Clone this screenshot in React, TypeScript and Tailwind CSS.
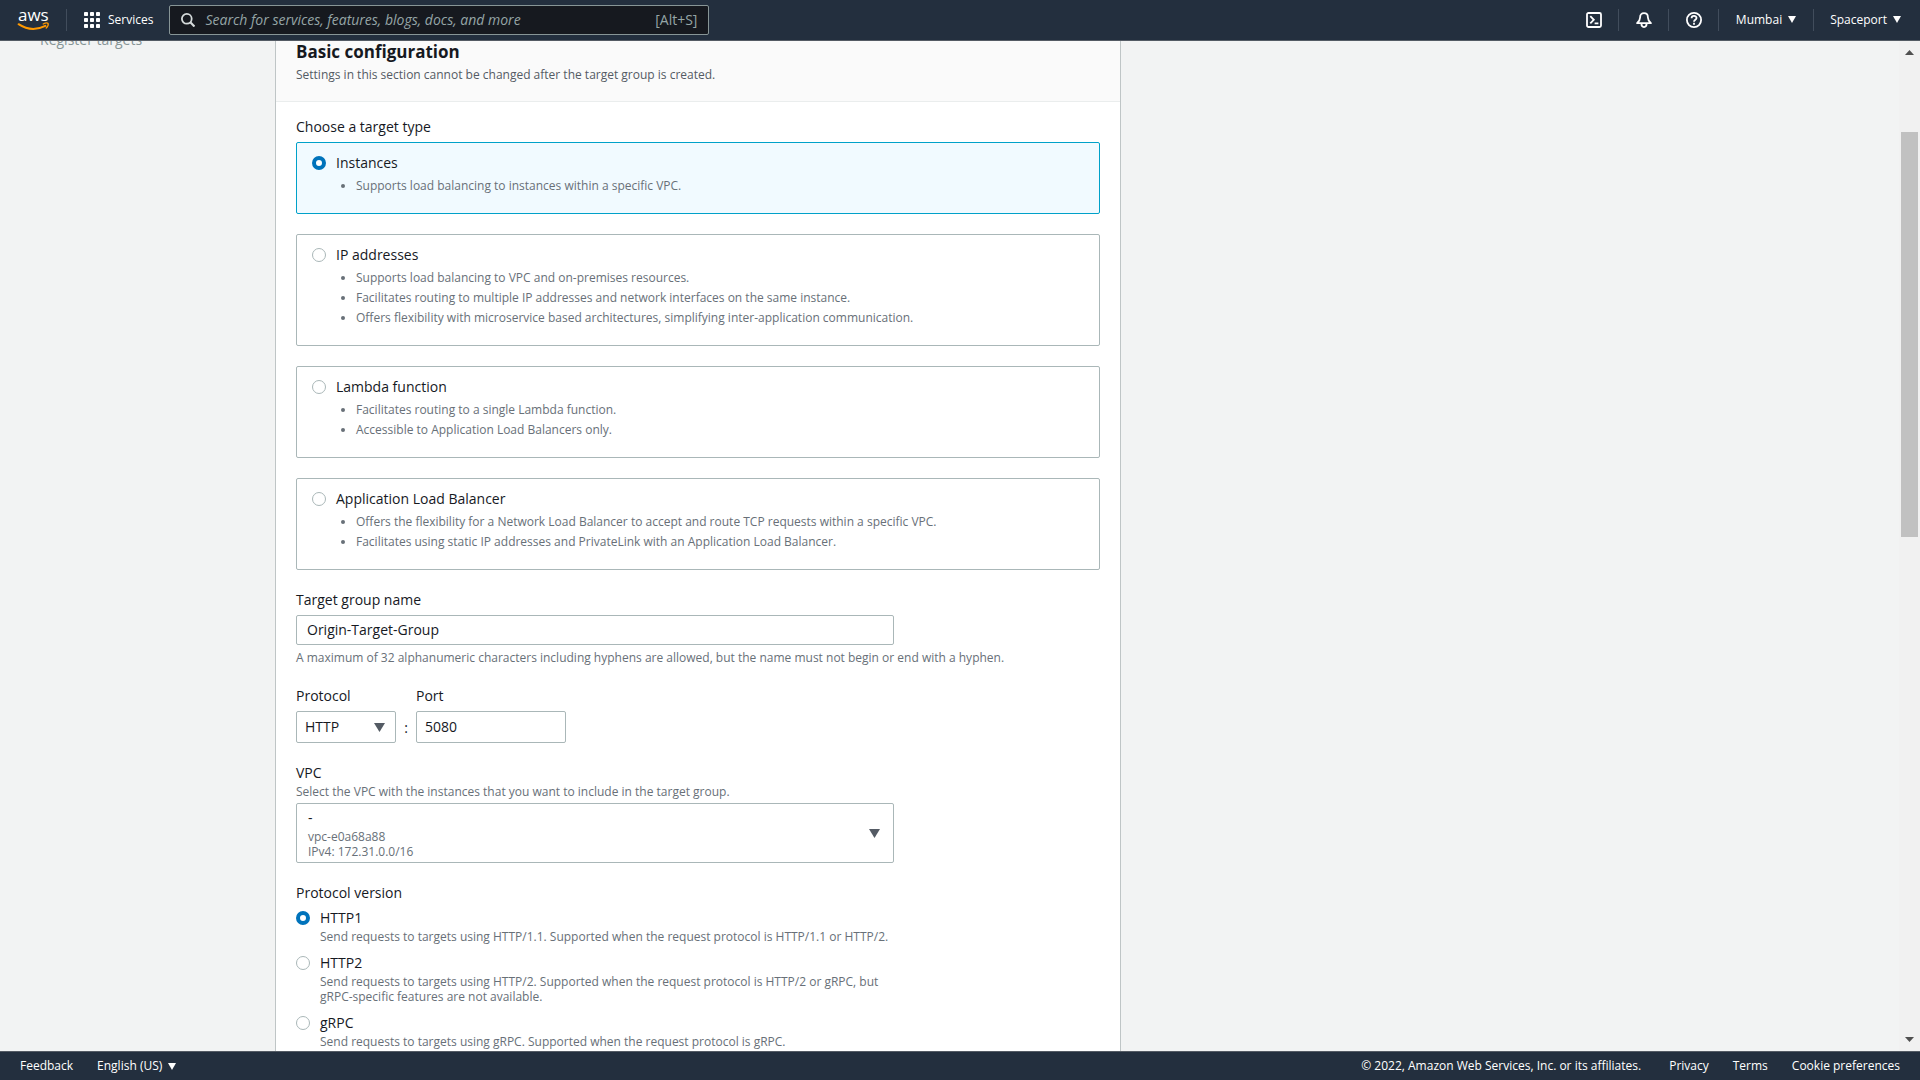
import { useState } from 'react'
import clsx from 'clsx'

const targetTypes = [
  {
    id: 'instances',
    label: 'Instances',
    notes: ['Supports load balancing to instances within a specific VPC.'],
  },
  {
    id: 'ip',
    label: 'IP addresses',
    notes: [
      'Supports load balancing to VPC and on-premises resources.',
      'Facilitates routing to multiple IP addresses and network interfaces on the same instance.',
      'Offers flexibility with microservice based architectures, simplifying inter-application communication.',
    ],
  },
  {
    id: 'lambda',
    label: 'Lambda function',
    notes: [
      'Facilitates routing to a single Lambda function.',
      'Accessible to Application Load Balancers only.',
    ],
  },
  {
    id: 'alb',
    label: 'Application Load Balancer',
    notes: [
      'Offers the flexibility for a Network Load Balancer to accept and route TCP requests within a specific VPC.',
      'Facilitates using static IP addresses and PrivateLink with an Application Load Balancer.',
    ],
  },
]

const versions = [
  {
    id: 'http1',
    label: 'HTTP1',
    text: 'Send requests to targets using HTTP/1.1. Supported when the request protocol is HTTP/1.1 or HTTP/2.',
  },
  {
    id: 'http2',
    label: 'HTTP2',
    text: 'Send requests to targets using HTTP/2. Supported when the request protocol is HTTP/2 or gRPC, but gRPC-specific features are not available.',
  },
  {
    id: 'grpc',
    label: 'gRPC',
    text: 'Send requests to targets using gRPC. Supported when the request protocol is gRPC.',
  },
]

const radioClass =
  'size-3.5 shrink-0 appearance-none rounded-full border border-[#aab7b8] bg-white checked:border-4 checked:border-[#0073bb]'

function Caret({ className }: { className?: string }) {
  return (
    <svg viewBox="0 0 10 8" preserveAspectRatio="none" fill="currentColor" className={clsx('shrink-0', className)}>
      <path d="M0 0h10L5 8z" />
    </svg>
  )
}

function Divider() {
  return <div className="h-[22px] w-px bg-[#414d5c]" />
}

function Logo() {
  return (
    <svg viewBox="0 0 32 24" className="h-6 w-8 overflow-visible">
      <text x="0" y="13" fontSize="17" fill="#fff" fontFamily="Open Sans">aws</text>
      <path
        d="M0.6 16.2c8.4 5.600 18.2 6 26.8 1.700"
        stroke="#ff9900"
        strokeWidth="2"
        strokeLinecap="round"
        fill="none"
      />
      <path d="M25.2 16c2-1 4.400-1.100 4.900-.5.3.9-.4 3.200-1.900 4.600" stroke="#ff9900" strokeWidth="1.3" strokeLinecap="round" fill="none" />
    </svg>
  )
}

function Header() {
  return (
    <header className="flex h-[41px] shrink-0 items-center border-b border-[#545b64] bg-[#232f3e] pb-px pr-[19px] text-xs font-medium text-white">
      <a href="#" aria-label="AWS home" className="ml-[18px]">
        <Logo />
      </a>
      <div className="ml-4">
        <Divider />
      </div>
      <button className="ml-[17px] flex items-center gap-2">
        <svg viewBox="0 0 16 16" fill="#fff" className="size-4">
          {[0, 6, 12].map((y) => [0, 6, 12].map((x) => <rect key={`${x}-${y}`} x={x} y={y} width="4" height="4" rx="0.8" />))}
        </svg>
        Services
      </button>
      <div className="ml-4 flex h-[30px] w-[540px] items-center rounded-xs border border-[#879596] bg-[#16191f] px-[11px] text-sm font-normal text-[#95a5a6]">
        <svg viewBox="0 0 14 14" fill="none" stroke="#d5dbdb" strokeWidth="1.8" className="size-3.5 shrink-0">
          <circle cx="5.8" cy="5.8" r="4.9" />
          <path d="m9.3 9.3 4.2 4.2" strokeWidth="2.2" />
        </svg>
        <input
          type="search"
          aria-label="Search"
          placeholder="Search for services, features, blogs, docs, and more"
          className="ml-2.5 min-w-0 flex-1 bg-transparent italic outline-none placeholder:text-[#95a5a6]"
        />
        <span>[Alt+S]</span>
      </div>

      <div className="ml-auto flex items-center">
        <button aria-label="CloudShell" className="px-4">
          <svg viewBox="0 0 16 16" fill="none" stroke="#fff" strokeWidth="1.8" className="size-4">
            <rect x="1" y="1" width="14" height="14" rx="1.5" />
            <path d="m4.3 4.2 3.5 3.6-3.5 3.6M8.6 11.4h3.8" />
          </svg>
        </button>
        <Divider />
        <button aria-label="Notifications" className="pl-[17px] pr-4">
          <svg viewBox="0 0 16 16" fill="none" stroke="#fff" strokeWidth="1.8" strokeLinejoin="round" className="size-4">
            <path d="M8 1.2c-2.500 0-3.900 1.700-3.900 4.200 0 2.300-.9 3.700-3 5.800h13.800c-2.100-2.100-3-3.500-3-5.800C11.900 2.900 10.500 1.200 8 1.200z" />
            <path d="M5.400 11.600c0 4.600 5.200 4.600 5.200 0" />
          </svg>
        </button>
        <Divider />
        <button aria-label="Help" className="pl-[17px] pr-4">
          <svg viewBox="0 0 16 16" fill="none" stroke="#fff" strokeWidth="1.8" className="size-4">
            <circle cx="8" cy="8" r="7.1" />
            <path d="M5.600 6.200c0-3 4.900-3 4.900-.2 0 1.700-2.500 1.700-2.500 3.700" />
            <path d="M8 10.800v2" />
          </svg>
        </button>
        <Divider />
        <button className="flex items-center gap-1.5 px-[17px]">
          Mumbai <Caret className="h-[7px] w-2" />
        </button>
        <Divider />
        <button className="flex items-center gap-1.5 pl-4">
          Spaceport <Caret className="h-[7px] w-2" />
        </button>
      </div>
    </header>
  )
}

function TargetTypes() {
  const [type, setType] = useState('instances')
  return (
    <fieldset>
      <legend className="mb-1">Choose a target type</legend>
      <div className="flex flex-col gap-5">
        {targetTypes.map((t) => (
          <div
            key={t.id}
            className={clsx(
              'rounded-xs border px-[15px] pb-[17px] pt-[9px]',
              t.id === type ? 'border-[#00a1c9] bg-[#f1faff]' : 'border-[#aab7b8] bg-white',
            )}
          >
            <label className="flex items-center gap-2.5">
              <input
                type="radio"
                name="target-type"
                checked={t.id === type}
                onChange={() => setType(t.id)}
                className={radioClass}
              />
              {t.label}
            </label>
            <ul className="mt-0.5 list-disc pl-11 text-xs/5 text-[#687078]">
              {t.notes.map((n) => (
                <li key={n}>{n}</li>
              ))}
            </ul>
          </div>
        ))}
      </div>
    </fieldset>
  )
}

function ProtocolVersion() {
  const [version, setVersion] = useState('http1')
  return (
    <fieldset className="max-w-[598px]">
      <legend className="mb-[3px]">Protocol version</legend>
      <div className="flex flex-col gap-2">
        {versions.map((v) => (
          <div key={v.id}>
            <label className="flex items-center gap-2.5">
              <input
                type="radio"
                name="version"
                checked={v.id === version}
                onChange={() => setVersion(v.id)}
                className={radioClass}
              />
              {v.label}
            </label>
            <p className="pl-6 text-xs/[15px] text-[#687078]">{v.text}</p>
          </div>
        ))}
      </div>
    </fieldset>
  )
}

export default function App() {
  return (
    <div className="flex h-screen flex-col overflow-hidden bg-[#f2f3f3] font-['Open_Sans',sans-serif] text-sm/[22px] text-[#16191f]">
      <Header />

      <div className="flex min-h-0 flex-1">
        <div className="min-w-0 flex-1 overflow-hidden">
          {/* scrolled content */}
          <div className="-mt-3 flex">
            <nav className="w-[275px] shrink-0 pl-10 text-[#879596]">Register targets</nav>

            <main className="w-full max-w-[846px] border-x border-[#bfc5c6] bg-white">
              <div className="border-b border-[#eaeded] bg-[#fafafa] px-5 pb-[15px] pt-3">
                <h2 className="text-[17px]/[22px] font-bold">Basic configuration</h2>
                <p className="mt-px text-xs/[22px] text-[#545b64]">
                  Settings in this section cannot be changed after the target group is created.
                </p>
              </div>

              <form className="flex flex-col gap-[19px] px-5 pb-6 pt-3.5">
                <TargetTypes />

                <div>
                  <label htmlFor="name" className="mb-1 block">Target group name</label>
                  <input
                    id="name"
                    defaultValue="Origin-Target-Group"
                    className="block h-[30px] w-full max-w-[598px] rounded-xs border border-[#aab7b8] px-2.5 pb-0.5"
                  />
                  <p className="mt-[5px] text-xs text-[#687078]">
                    A maximum of 32 alphanumeric characters including hyphens are allowed, but the name must not begin or
                    end with a hyphen.
                  </p>
                </div>

                <div className="flex items-end">
                  <div className="w-[100px]">
                    <label htmlFor="protocol" className="mb-1 block">Protocol</label>
                    <div className="relative">
                      <select
                        id="protocol"
                        className="block h-8 w-full appearance-none rounded-xs border border-[#aab7b8] bg-white px-2"
                      >
                        <option>HTTP</option>
                        <option>HTTPS</option>
                      </select>
                      <Caret className="pointer-events-none absolute right-[11px] top-3 h-[9px] w-[11px] text-[#545b64]" />
                    </div>
                  </div>
                  <span className="w-5 pb-1 text-center">:</span>
                  <div className="w-[150px]">
                    <label htmlFor="port" className="mb-1 block">Port</label>
                    <input
                      id="port"
                      defaultValue="5080"
                      className="block h-8 w-full rounded-xs border border-[#aab7b8] px-2 pb-0.5"
                    />
                  </div>
                </div>

                <div>
                  <label htmlFor="vpc" className="block">VPC</label>
                  <p className="mb-1 text-xs/[15px] text-[#687078]">
                    Select the VPC with the instances that you want to include in the target group.
                  </p>
                  <button
                    id="vpc"
                    type="button"
                    aria-haspopup="listbox"
                    className="flex w-full max-w-[598px] items-center justify-between rounded-xs border border-[#aab7b8] py-[3px] pl-[11px] pr-[13px] text-left"
                  >
                    <span>
                      <span className="block">-</span>
                      <span className="block text-xs/[15px] text-[#687078]">vpc-e0a68a88</span>
                      <span className="block text-xs/[15px] text-[#687078]">IPv4: 172.31.0.0/16</span>
                    </span>
                    <Caret className="h-[9px] w-[11px] text-[#545b64]" />
                  </button>
                </div>

                <ProtocolVersion />
              </form>
            </main>
          </div>
        </div>

        {/* scrollbar */}
        <div className="flex w-[21px] flex-col items-center bg-[#f1f1f1] py-[9px] text-[#505050]">
          <Caret className="h-[5px] w-[9px] rotate-180" />
          <div className="mt-[77px] h-[405px] w-[17px] bg-[#c1c1c1]" />
          <Caret className="mt-auto h-[5px] w-[9px]" />
        </div>
      </div>

      <footer className="flex h-[29px] shrink-0 items-center border-t border-[#545b64] bg-[#232f3e] px-5 text-xs font-medium text-white">
        <a href="#">Feedback</a>
        <button className="ml-6 flex items-center gap-1.5">
          English (US) <Caret className="h-[7px] w-2" />
        </button>
        <span className="ml-auto">© 2022, Amazon Web Services, Inc. or its affiliates.</span>
        <a href="#" className="ml-7">Privacy</a>
        <a href="#" className="ml-6">Terms</a>
        <a href="#" className="ml-6">Cookie preferences</a>
      </footer>
    </div>
  )
}
